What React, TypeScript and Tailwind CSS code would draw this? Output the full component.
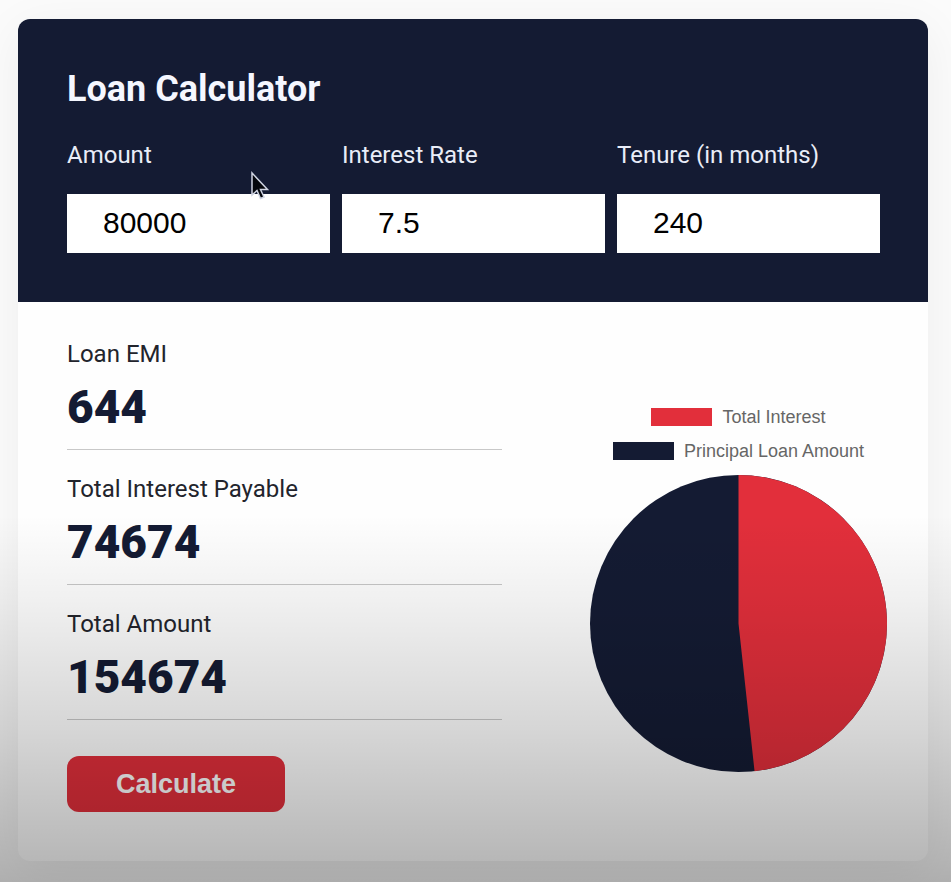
import { useState } from "react";

type FieldProps = {
  id: string;
  label: string;
  value: string;
  onChange: (value: string) => void;
};

function Field({ id, label, value, onChange }: FieldProps) {
  return (
    <div className="flex min-w-0 flex-col gap-[25px]">
      <label htmlFor={id} className="text-2xl leading-[28px] whitespace-nowrap text-[#e9edf8]">
        {label}
      </label>
      <input
        id={id}
        type="text"
        inputMode="decimal"
        value={value}
        onChange={(e) => onChange(e.target.value)}
        className="h-[59px] w-full bg-white px-9 pb-0.5 font-['Liberation_Sans',Arial,sans-serif] text-[30px] text-black outline-none"
      />
    </div>
  );
}

function Result({ label, value }: { label: string; value: number }) {
  return (
    <div className="border-b border-[#c8c8c8] pb-[15px]">
      <h2 className="text-2xl leading-[28px] text-[#22242c]">{label}</h2>
      <p className="mt-3 text-[46px] leading-[54px] font-black text-[#141b33]">{value}</p>
    </div>
  );
}

function LegendItem({ swatch, label }: { swatch: string; label: string }) {
  return (
    <li className="flex items-center gap-2.5">
      <span className={`h-[18px] w-[61px] ${swatch}`} />
      <span className="text-lg leading-[22px] whitespace-nowrap">{label}</span>
    </li>
  );
}

function PieChart({ share }: { share: number }) {
  const angle = share * 2 * Math.PI;
  const x = 100 + 100 * Math.sin(angle);
  const y = 100 - 100 * Math.cos(angle);
  const largeArc = share > 0.5 ? 1 : 0;
  return (
    <svg viewBox="0 0 200 200" className="w-full" role="img" aria-label="Loan breakdown">
      <circle cx="100" cy="100" r="100" fill="#141b33" />
      <path d={`M100 100V0A100 100 0 ${largeArc} 1 ${x} ${y}Z`} fill="#e22f3b" />
    </svg>
  );
}

export default function App() {
  const [amount, setAmount] = useState("80000");
  const [rate, setRate] = useState("7.5");
  const [tenure, setTenure] = useState("240");
  const [loan, setLoan] = useState({ principal: 80000, rate: 7.5, months: 240 });

  const monthly = loan.rate / 1200;
  const growth = Math.pow(1 + monthly, loan.months);
  const emi = monthly === 0 ? loan.principal / loan.months : (loan.principal * monthly * growth) / (growth - 1);
  const total = emi * loan.months;
  const interest = total - loan.principal;

  return (
    <div className="relative min-h-screen bg-[#fbfbfb] pt-[19px] pr-[23px] pb-[21px] pl-[18px] font-[Roboto,sans-serif]">
      <main className="overflow-hidden rounded-xl bg-[#fefefe] shadow-[0_10px_50px_rgba(0,0,0,0.06)]">
        <form
          onSubmit={(e) => {
            e.preventDefault();
            setLoan({ principal: Number(amount), rate: Number(rate), months: Number(tenure) });
          }}
        >
          <header className="bg-[#141b33] pt-[49px] pr-12 pb-[49px] pl-[49px]">
            <h1 className="text-4xl leading-[43px] font-bold text-[#f5f7ff]">Loan Calculator</h1>
            <div className="mt-[30px] grid grid-cols-3 gap-3">
              <Field id="amount" label="Amount" value={amount} onChange={setAmount} />
              <Field id="rate" label="Interest Rate" value={rate} onChange={setRate} />
              <Field id="tenure" label="Tenure (in months)" value={tenure} onChange={setTenure} />
            </div>
          </header>
          <section className="flex items-end justify-between pt-[38px] pr-[41px] pb-[49px] pl-[49px]">
            <div className="w-[53%]">
              <div className="flex flex-col gap-[25px]">
                <Result label="Loan EMI" value={Math.round(emi)} />
                <Result label="Total Interest Payable" value={Math.round(interest)} />
                <Result label="Total Amount" value={Math.round(total)} />
              </div>
              <button
                type="submit"
                className="mt-9 h-14 rounded-xl bg-[#e22f3b] px-[49px] font-['Liberation_Sans',Arial,sans-serif] text-[27px] font-bold text-white"
              >
                Calculate
              </button>
            </div>
            <div className="flex w-[297px] flex-col items-center pb-10 font-['Liberation_Sans',Arial,sans-serif] text-[#666666]">
              <ul className="mb-[13px] flex flex-col items-center gap-3">
                <LegendItem swatch="bg-[#e22f3b]" label="Total Interest" />
                <LegendItem swatch="bg-[#141b33]" label="Principal Loan Amount" />
              </ul>
              <PieChart share={interest / total} />
            </div>
          </section>
        </form>
      </main>
      {/* Shade rising from the bottom edge */}
      <div className="pointer-events-none absolute inset-x-0 bottom-0 h-[367px] bg-[linear-gradient(to_bottom,rgba(0,0,0,0),rgba(0,0,0,0.055)_23%,rgba(0,0,0,0.16)_59%,rgba(0,0,0,0.28)_94%,rgba(0,0,0,0.3))]" />
      {/* Mouse pointer */}
      <svg
        viewBox="0 0 20 30"
        className="pointer-events-none absolute top-[171px] left-[250px] h-[30px] w-5"
        aria-hidden="true"
      >
        <path
          d="M2 2V24L7 19.5L10.5 27.5L14 26L10.5 18.5H17.5Z"
          fill="#05070d"
          stroke="#cfd4e2"
          strokeWidth="1.5"
        />
      </svg>
    </div>
  );
}
